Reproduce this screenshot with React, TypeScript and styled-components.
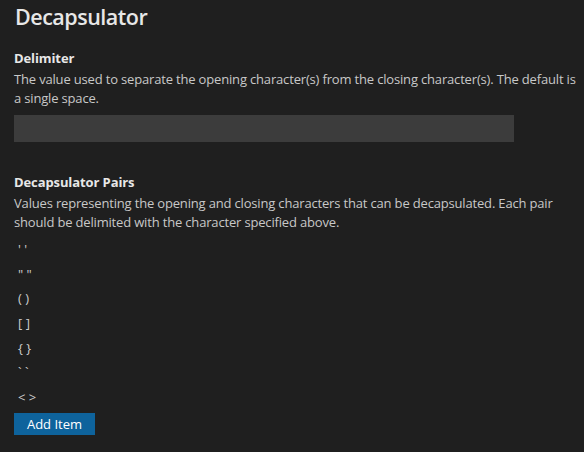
import React from 'react';
import styled, { createGlobalStyle } from 'styled-components';

const GlobalStyle = createGlobalStyle`
  html, body {
    margin: 0;
    padding: 0;
    background: #1f1f1f;
  }
  body {
    font-family: "Open Sans", "Noto Sans", sans-serif;
    color: #cccccc;
  }
`;

const Page = styled.div`
  width: 584px;
  height: 452px;
  box-sizing: border-box;
  padding: 2px 0 0 14px;
  background: #1f1f1f;
  overflow: hidden;
`;

const Title = styled.h1`
  margin: 0 0 0 1px;
  font-size: 21.5px;
  font-weight: 600;
  letter-spacing: -0.5px;
  line-height: 30px;
  color: #e7e7e7;
`;

const Section = styled.section<{ $top: number }>`
  display: flex;
  flex-direction: column;
  margin-top: ${(p) => p.$top}px;
`;

const Label = styled.div`
  font-size: 13px;
  font-weight: 700;
  line-height: 18px;
  letter-spacing: -0.1px;
  color: #e7e7e7;
`;

const Description = styled.p`
  margin: 3px 0 0;
  width: 566px;
  font-size: 13px;
  line-height: 19px;
  letter-spacing: -0.17px;
  color: #c8c8c8;
`;

const TextInput = styled.input`
  box-sizing: border-box;
  width: 500px;
  height: 27px;
  margin-top: 7px;
  border: none;
  outline: none;
  background: #3c3c3c;
  color: #cccccc;
  padding: 0 6px;
  font-family: inherit;
  font-size: 13px;
`;

const PairList = styled.ul`
  list-style: none;
  margin: 5px 0 0;
  padding: 0;
  display: flex;
  flex-direction: column;
`;

const PairItem = styled.li`
  height: 24.6px;
  display: flex;
  align-items: center;
  padding-left: 4px;
  font-size: 13px;
  color: #cccccc;
  white-space: pre;
`;

const AddButton = styled.button`
  margin-top: 4px;
  align-self: flex-start;
  width: 81px;
  height: 22px;
  border: none;
  background: #0e639c;
  color: #ffffff;
  font-family: inherit;
  font-size: 13px;
  padding: 0;
  cursor: pointer;
`;

const pairs = ["' '", '" "', '( )', '[ ]', '{ }', '` `', '< >'];

export default function App() {
  return (
    <Page>
      <GlobalStyle />
      <Title>Decapsulator</Title>
      <Section $top={17}>
        <Label>Delimiter</Label>
        <Description>
          The value used to separate the opening character(s) from the closing character(s). The default is a
          single space.
        </Description>
        <TextInput defaultValue="" />
      </Section>
      <Section $top={31}>
        <Label>Decapsulator Pairs</Label>
        <Description>
          Values representing the opening and closing characters that can be decapsulated. Each pair should be
          delimited with the character specified above.
        </Description>
        <PairList>
          {pairs.map((p) => (
            <PairItem key={p}>{p}</PairItem>
          ))}
        </PairList>
        <AddButton>Add Item</AddButton>
      </Section>
    </Page>
  );
}
